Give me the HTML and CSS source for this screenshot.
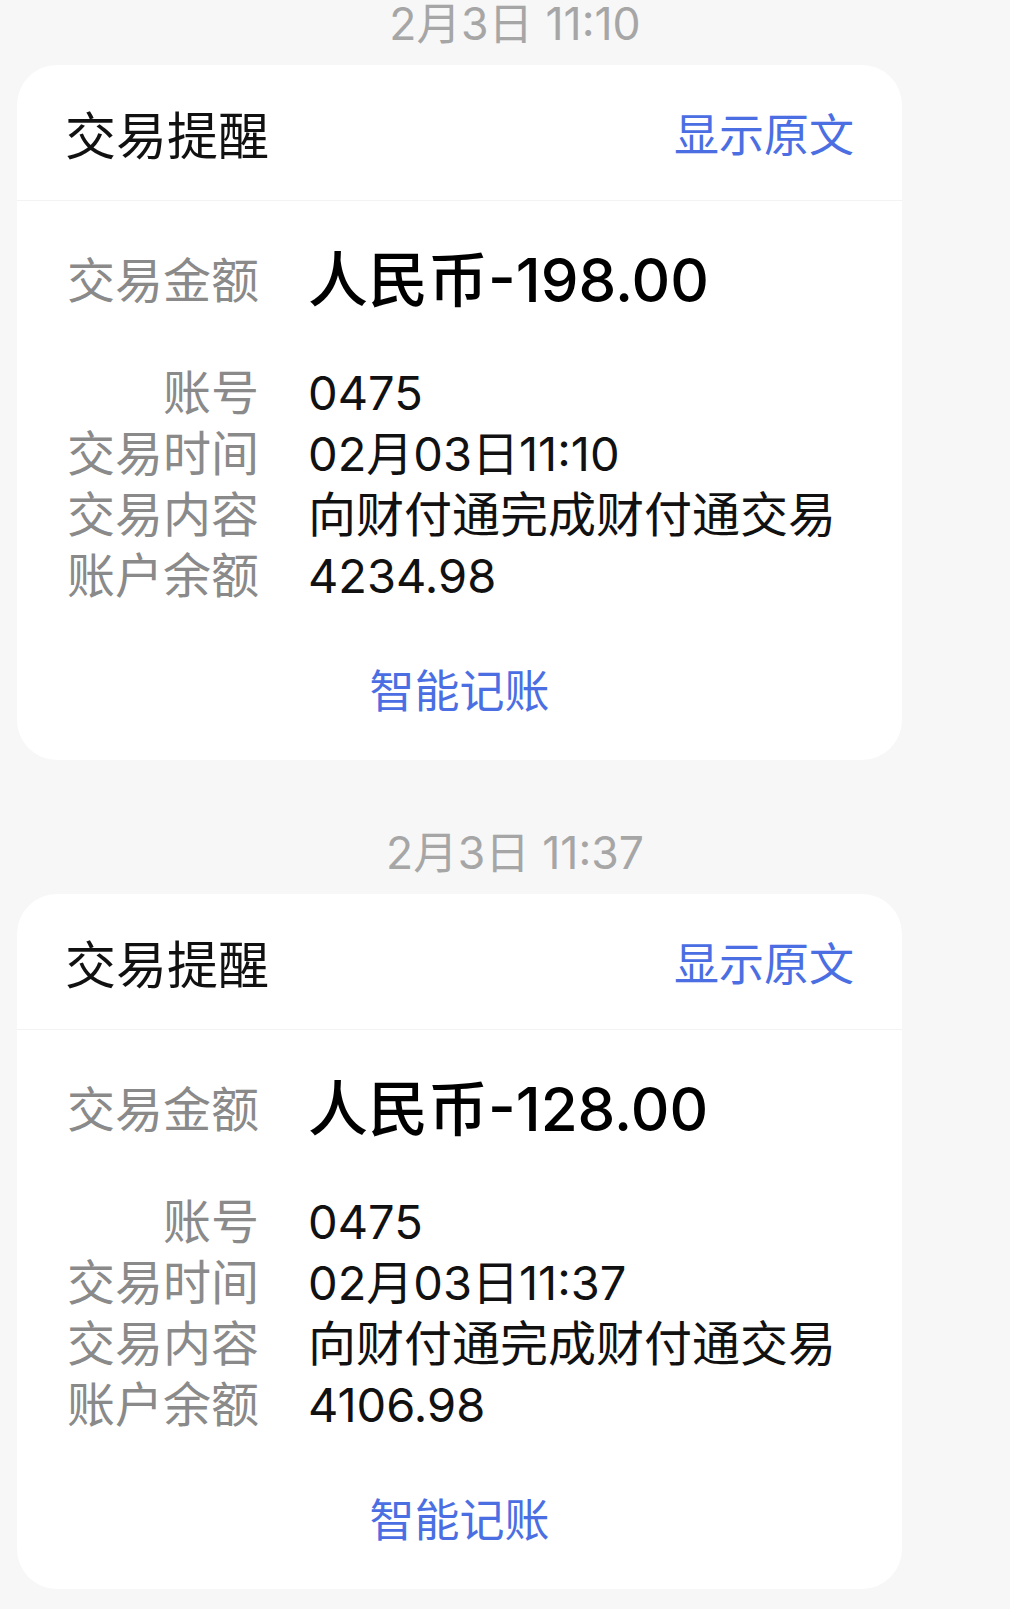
FILE: index.html
```html
<!DOCTYPE html>
<html lang="zh-CN">
<head>
    <meta charset="UTF-8">
    <meta name="viewport" content="width=device-width, initial-scale=1.0">
    <title>交易提醒</title>
    <link rel="stylesheet" href="styles.css">
</head>
<body>
    <div class="messages">
        <div class="msg">
            <div class="msg-time">2月3日 11:10</div>
            <div class="card">
                <div class="card-head">
                    <span class="card-title">交易提醒</span>
                    <a class="show-raw" href="#">显示原文</a>
                </div>
                <div class="card-body">
                    <div class="amount-row">
                        <span class="label">交易金额</span>
                        <span class="amount">人民币-198.00</span>
                    </div>
                    <div class="details">
                        <span class="label">账号</span><span class="value">0475</span>
                        <span class="label">交易时间</span><span class="value">02月03日11:10</span>
                        <span class="label">交易内容</span><span class="value cn">向财付通完成财付通交易</span>
                        <span class="label">账户余额</span><span class="value">4234.98</span>
                    </div>
                    <div class="card-action"><a href="#">智能记账</a></div>
                </div>
            </div>
        </div>

        <div class="msg">
            <div class="msg-time">2月3日 11:37</div>
            <div class="card">
                <div class="card-head">
                    <span class="card-title">交易提醒</span>
                    <a class="show-raw" href="#">显示原文</a>
                </div>
                <div class="card-body">
                    <div class="amount-row">
                        <span class="label">交易金额</span>
                        <span class="amount">人民币-128.00</span>
                    </div>
                    <div class="details">
                        <span class="label">账号</span><span class="value">0475</span>
                        <span class="label">交易时间</span><span class="value">02月03日11:37</span>
                        <span class="label">交易内容</span><span class="value cn">向财付通完成财付通交易</span>
                        <span class="label">账户余额</span><span class="value">4106.98</span>
                    </div>
                    <div class="card-action"><a href="#">智能记账</a></div>
                </div>
            </div>
        </div>
    </div>
</body>
</html>
```

FILE: styles.css
```css
body {
    margin: 0;
    padding: 0;
    background-color: #f7f7f7;
    font-family: Inter, "Noto Sans CJK SC", sans-serif;
    color: #111;
}

.messages {
    padding: 0 108px 0 17px;
}

.msg {
    margin-bottom: 69px;
}

.msg-time {
    height: 48px;
    line-height: 48px;
    margin: 0 -108px 17px 3px;
    text-align: center;
    font-size: 44.5px;
    color: #a6a6a6;
}

.card {
    background: #fff;
    border-radius: 40px;
    height: 695px;
    box-sizing: border-box;
}

.card-head {
    display: flex;
    justify-content: space-between;
    align-items: center;
    height: 135px;
    padding: 0 48px;
    border-bottom: 1px solid #f3f3f3;
}

.card-title {
    font-size: 51px;
    color: #111;
}

.show-raw {
    font-size: 45px;
    color: #4b6fe3;
    text-decoration: none;
}

.card-body {
    padding: 39px 48px 0 48px;
}

.amount-row,
.details {
    display: grid;
    grid-template-columns: 194px 1fr;
    column-gap: 49px;
}

.amount-row {
    align-items: center;
    height: 80px;
    margin-bottom: 42px;
}

.label {
    text-align: right;
    font-size: 48px;
    line-height: 61px;
    color: #8a8a8a;
    white-space: nowrap;
}

.amount {
    font-size: 60px;
    font-weight: 500;
    line-height: 80px;
    color: #000;
}

.value {
    font-size: 47px;
    line-height: 61px;
    color: #111;
    white-space: nowrap;
}

.value.cn {
    font-size: 48px;
}

.card-action {
    margin-top: 56px;
    text-align: center;
    line-height: 60px;
}

.card-action a {
    font-size: 45px;
    color: #4b6fe3;
    text-decoration: none;
}
```
